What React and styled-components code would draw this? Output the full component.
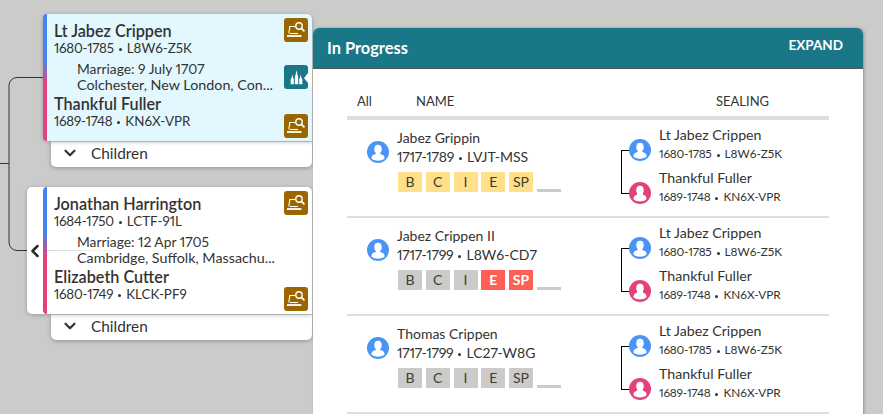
import React from "react";
import styled, { createGlobalStyle } from "styled-components";
import { ChevronDown, ChevronLeft } from "lucide-react";

const GlobalStyle = createGlobalStyle`
  html, body {
    margin: 0;
    height: 100%;
    overflow: hidden;
    background: #cbcbca;
  }
  body {
    font-family: Lato, "Open Sans", Arial, sans-serif;
    color: #333331;
    font-variant-numeric: proportional-nums;
  }
`;

const Page = styled.div`
  position: relative;
  display: flex;
  width: 883px;
  height: 414px;
  overflow: hidden;
  background: #cbcbca;
`;

const TreeColumn = styled.div`
  display: flex;
  flex-direction: column;
  gap: 20px;
  width: 312px;
  padding-top: 14px;
  flex: none;
`;

const Lines = styled.svg`
  position: absolute;
  left: 0;
  top: 0;
`;

const Couple = styled.div`
  position: relative;
  display: flex;
  flex-direction: column;
  align-items: flex-end;
`;

const Card = styled.div`
  position: relative;
  display: flex;
  width: ${(p) => (p.$expanded ? "285px" : "269px")};
  height: 127px;
  box-sizing: border-box;
  padding-left: ${(p) => (p.$expanded ? "27px" : "11px")};
  background: ${(p) => (p.$selected ? "#e2f7fe" : "#ffffff")};
  border-radius: 5px 5px 0 5px;
  box-shadow: 0 1px 4px rgba(0, 0, 0, 0.25);
  z-index: 1;
`;

const GenderBar = styled.div`
  position: absolute;
  left: ${(p) => (p.$expanded ? "16px" : "0")};
  top: 0;
  bottom: 0;
  width: 4px;
  border-radius: 4px 0 0 4px;
  background: linear-gradient(#4583f3 0%, #4583f3 36%, #e5407e 55%, #e5407e 100%);
`;

const Back = styled.span`
  position: absolute;
  left: -2px;
  top: 54px;
  display: flex;
  color: #2b2b2b;
`;

const MidLine = styled.div`
  position: absolute;
  left: 20px;
  top: 63px;
  width: 80px;
  height: 1px;
  background: linear-gradient(90deg, #d5d5d5, rgba(213, 213, 213, 0));
`;

const Info = styled.div`
  flex: 1;
  min-width: 0;
  padding-top: 8px;
`;

const CardName = styled.div`
  font-size: 16.2px;
  font-weight: 600;
  line-height: 18px;
`;

const CardLife = styled.div`
  font-size: 13.4px;
  line-height: 17px;
`;

const Marriage = styled.div`
  margin: 4px 0 2px 23px;
  font-size: 13.8px;
  line-height: 16px;
  white-space: nowrap;
`;

const Place = styled.div`
  font-size: 14.3px;
`;

const Years = styled.span`
  letter-spacing: -0.02em;
`;

const Dot = styled.span`
  display: inline-block;
  width: 3px;
  height: 3px;
  margin: 0 5px 0 5px;
  border-radius: 50%;
  background: currentColor;
  vertical-align: middle;
`;

const Actions = styled.div`
  display: flex;
  flex-direction: column;
  justify-content: space-between;
  align-items: center;
  width: 24px;
  padding: 4px 4px 3px 0;
`;

const IconButton = styled.div`
  display: flex;
  align-items: center;
  justify-content: center;
  width: 24px;
  height: 24px;
  margin-bottom: ${(p) => (p.$temple ? "2px" : "0")};
  border-radius: 3px;
  background: ${(p) => (p.$temple ? "#1a7788" : "#996600")};
`;

const Pointer = styled.div`
  position: absolute;
  right: 0;
  top: 54px;
  width: 0;
  height: 0;
  border-top: 10px solid transparent;
  border-bottom: 10px solid transparent;
  border-right: 8px solid #ffffff;
`;

const ChildrenBar = styled.div`
  display: flex;
  align-items: center;
  gap: 12px;
  width: 261px;
  height: 26px;
  box-sizing: border-box;
  padding: 0 0 4px 10px;
  background: #ffffff;
  border-top: 1px solid #cfcfcf;
  border-radius: 0 0 5px 5px;
  box-shadow: 0 1px 4px rgba(0, 0, 0, 0.3);
  font-size: 15.4px;
`;

const Panel = styled.div`
  flex: none;
  width: 550px;
  margin: 28px 0 0 1px;
  background: #ffffff;
  border-radius: 6px 6px 0 0;
  box-shadow: 1px 0 3px rgba(0, 0, 0, 0.3);
  z-index: 2;
  height: 400px;
`;

const PanelHeader = styled.div`
  display: flex;
  justify-content: space-between;
  height: 40px;
  padding: 0 20px 0 14px;
  background: #1a7788;
  border-bottom: 1px solid #555;
  border-radius: 6px 6px 0 0;
  color: #ffffff;
  font-weight: 700;
`;

const PanelTitle = styled.div`
  font-size: 16.4px;
  line-height: 40px;
`;

const Expand = styled.div`
  font-size: 13.5px;
  line-height: 34px;
`;

const Table = styled.div`
  width: 482px;
  margin-left: 34px;
`;

const HeadRow = styled.div`
  display: grid;
  grid-template-columns: 59px 300px 1fr;
  height: 51px;
  box-sizing: border-box;
  padding: 23px 0 0 10px;
  border-bottom: 4px solid #dedede;
  font-size: 13px;
  line-height: 18px;
`;

const Row = styled.div`
  display: grid;
  grid-template-columns: 274px 1fr;
  height: 98px;
  box-sizing: border-box;
  border-bottom: 2px solid #dedede;
`;

const PersonCell = styled.div`
  display: flex;
  gap: 8px;
  padding: 8px 0 0 20px;
`;

const AvatarWrap = styled.div`
  flex: none;
  width: 22px;
  height: 22px;
  margin-top: ${(p) => p.$top || 0}px;
`;

const PersonName = styled.div`
  font-size: 14px;
  line-height: 19px;
`;

const PersonLife = styled.div`
  font-size: 14px;
  line-height: 19px;
`;

const Chips = styled.div`
  display: flex;
  align-items: flex-end;
  gap: 3.75px;
  margin: 6px 0 0 1px;
`;

const chipColors = {
  done: "#ffdf88",
  idle: "#cbcbca",
  alert: "#ff5f55",
};

const Chip = styled.div`
  width: 24px;
  height: 20px;
  background: ${(p) => chipColors[p.$state]};
  color: ${(p) => (p.$state === "alert" ? "#ffffff" : "#3c3c3a")};
  font-weight: ${(p) => (p.$state === "alert" ? 700 : 400)};
  font-size: 14px;
  line-height: 20px;
  text-align: center;
`;

const Dash = styled.div`
  width: 24px;
  height: 3px;
  background: #cbcbca;
`;

const SealingCell = styled.div`
  position: relative;
  padding-top: 5px;
`;

const Bracket = styled.div`
  position: absolute;
  left: 0;
  top: 30px;
  width: 8px;
  height: 44px;
  box-sizing: border-box;
  border: 1px solid #000;
  border-right: 0;
`;

const ParentRow = styled.div`
  position: relative;
  display: flex;
  gap: 8px;
  height: 43px;
  padding-left: 8px;
`;

const ParentName = styled.div`
  font-size: 14.2px;
  line-height: 19px;
`;

const ParentLife = styled.div`
  font-size: 11.8px;
  line-height: 19px;
`;

const PersonIcon = ({ female }) => (
  <svg width="22" height="22" viewBox="0 0 22 22">
    <circle cx="11" cy="11" r="11" fill={female ? "#e5407e" : "#4a94f6"} />
    <ellipse cx="11" cy="8.200" rx="3.700" ry="4.400" fill="#fff" />
    {female ? (
      <path d="M8.200 11.500h5.600l.6 1.600c2 .5 3 1.400 3 3 .2 1-.1 1.400-.4 1.700-1.800 1.200-3.800 1.700-6 1.700s-4.200-.5-6-1.700c-.3-.3-.6-.7-.4-1.700 0-1.600 1-2.500 3-3z" fill="#fff" />
    ) : (
      <path d="M8.800 11.500h4.400v1.400c2.600.7 4 1.300 4.200 3.200l.1 1.700c-1.800 1.300-4 2-6.500 2s-4.700-.7-6.500-2l.1-1.700c.2-1.900 1.600-2.500 4.200-3.200z" fill="#fff" />
    )}
  </svg>
);

const ResearchIcon = () => (
  <svg width="20" height="18" viewBox="0 0 20 18" fill="none" stroke="#fff">
    <path d="M9 5.500H3.800L2.800 12.500" strokeWidth="1.100" />
    <path d="M12 12.500H4" strokeWidth="1.100" />
    <path d="M1 15h14.500" strokeWidth="1.800" />
    <circle cx="13" cy="5" r="3.200" strokeWidth="1.400" />
    <path d="M15.400 7.400 18.500 10.400" strokeWidth="1.800" />
  </svg>
);

const TempleIcon = () => (
  <svg width="15" height="17" viewBox="0 0 18 20" fill="#fff">
    <path d="M9 1 10.200 7 11 9v9H7V9l.8-2z" />
    <path d="M4 6 4.900 10.500 5.800 12v6H2v-6l1.100-1.500z" />
    <path d="M14 6l.9 4.500L16 12v6h-3.800v-6l.9-1.500z" />
  </svg>
);

const Life = ({ years, id }) => (
  <>
    <Years>{years}</Years>
    <Dot />
    {id}
  </>
);

const couples = [
  {
    selected: true,
    husband: { name: "Lt Jabez Crippen", years: "1680-1785", id: "L8W6-Z5K" },
    date: "Marriage: 9 July 1707",
    place: "Colchester, New London, Con...",
    wife: { name: "Thankful Fuller", years: "1689-1748", id: "KN6X-VPR" },
  },
  {
    expanded: true,
    husband: { name: "Jonathan Harrington", years: "1684-1750", id: "LCTF-91L" },
    date: "Marriage: 12 Apr 1705",
    place: "Cambridge, Suffolk, Massachu...",
    wife: { name: "Elizabeth Cutter", years: "1680-1749", id: "KLCK-PF9" },
  },
];

const rows = [
  {
    name: "Jabez Grippin",
    years: "1717-1789",
    id: "LVJT-MSS",
    chips: [["B", "done"], ["C", "done"], ["I", "done"], ["E", "done"], ["SP", "done"]],
  },
  {
    name: "Jabez Crippen II",
    years: "1717-1799",
    id: "L8W6-CD7",
    chips: [["B", "idle"], ["C", "idle"], ["I", "idle"], ["E", "alert"], ["SP", "alert"]],
  },
  {
    name: "Thomas Crippen",
    years: "1717-1799",
    id: "LC27-W8G",
    chips: [["B", "idle"], ["C", "idle"], ["I", "idle"], ["E", "idle"], ["SP", "idle"]],
  },
];

const App = () => {
  return (
    <Page>
      <GlobalStyle />
      <Lines width="50" height="260">
        <path
          d="M43 77.500H17a8 8 0 0 0-8 8V242a8 8 0 0 0 8 8.500H27M0 163.500H9"
          fill="none"
          stroke="#333"
          strokeWidth="1"
        />
      </Lines>
      <TreeColumn>
        {couples.map((c) => (
          <Couple key={c.husband.name}>
            <Card $selected={c.selected} $expanded={c.expanded}>
              <GenderBar $expanded={c.expanded} />
              {c.expanded && (
                <>
                  <Back>
                    <ChevronLeft size={20} strokeWidth={3} />
                  </Back>
                  <MidLine />
                </>
              )}
              <Info>
                <CardName>{c.husband.name}</CardName>
                <CardLife>
                  <Life years={c.husband.years} id={c.husband.id} />
                </CardLife>
                <Marriage>
                  {c.date}
                  <Place>{c.place}</Place>
                </Marriage>
                <CardName>{c.wife.name}</CardName>
                <CardLife>
                  <Life years={c.wife.years} id={c.wife.id} />
                </CardLife>
              </Info>
              <Actions>
                <IconButton>
                  <ResearchIcon />
                </IconButton>
                {c.selected && (
                  <IconButton $temple>
                    <TempleIcon />
                  </IconButton>
                )}
                <IconButton>
                  <ResearchIcon />
                </IconButton>
              </Actions>
              {c.selected && <Pointer />}
            </Card>
            <ChildrenBar>
              <ChevronDown size={18} strokeWidth={3} />
              Children
            </ChildrenBar>
          </Couple>
        ))}
      </TreeColumn>
      <Panel>
        <PanelHeader>
          <PanelTitle>In Progress</PanelTitle>
          <Expand>EXPAND</Expand>
        </PanelHeader>
        <Table>
          <HeadRow>
            <span>All</span>
            <span>NAME</span>
            <span>SEALING</span>
          </HeadRow>
          {rows.map((r) => (
            <Row key={r.name}>
              <PersonCell>
                <AvatarWrap $top={13}>
                  <PersonIcon />
                </AvatarWrap>
                <div>
                  <PersonName>{r.name}</PersonName>
                  <PersonLife>
                    <Life years={r.years} id={r.id} />
                  </PersonLife>
                  <Chips>
                    {r.chips.map(([label, state]) => (
                      <Chip key={label} $state={state}>
                        {label}
                      </Chip>
                    ))}
                    <Dash />
                  </Chips>
                </div>
              </PersonCell>
              <SealingCell>
                <Bracket />
                <ParentRow>
                  <AvatarWrap $top={14}>
                    <PersonIcon />
                  </AvatarWrap>
                  <div>
                    <ParentName>Lt Jabez Crippen</ParentName>
                    <ParentLife>
                      <Life years="1680-1785" id="L8W6-Z5K" />
                    </ParentLife>
                  </div>
                </ParentRow>
                <ParentRow>
                  <AvatarWrap $top={14}>
                    <PersonIcon female />
                  </AvatarWrap>
                  <div>
                    <ParentName>Thankful Fuller</ParentName>
                    <ParentLife>
                      <Life years="1689-1748" id="KN6X-VPR" />
                    </ParentLife>
                  </div>
                </ParentRow>
              </SealingCell>
            </Row>
          ))}
        </Table>
      </Panel>
    </Page>
  );
};

export default App;
